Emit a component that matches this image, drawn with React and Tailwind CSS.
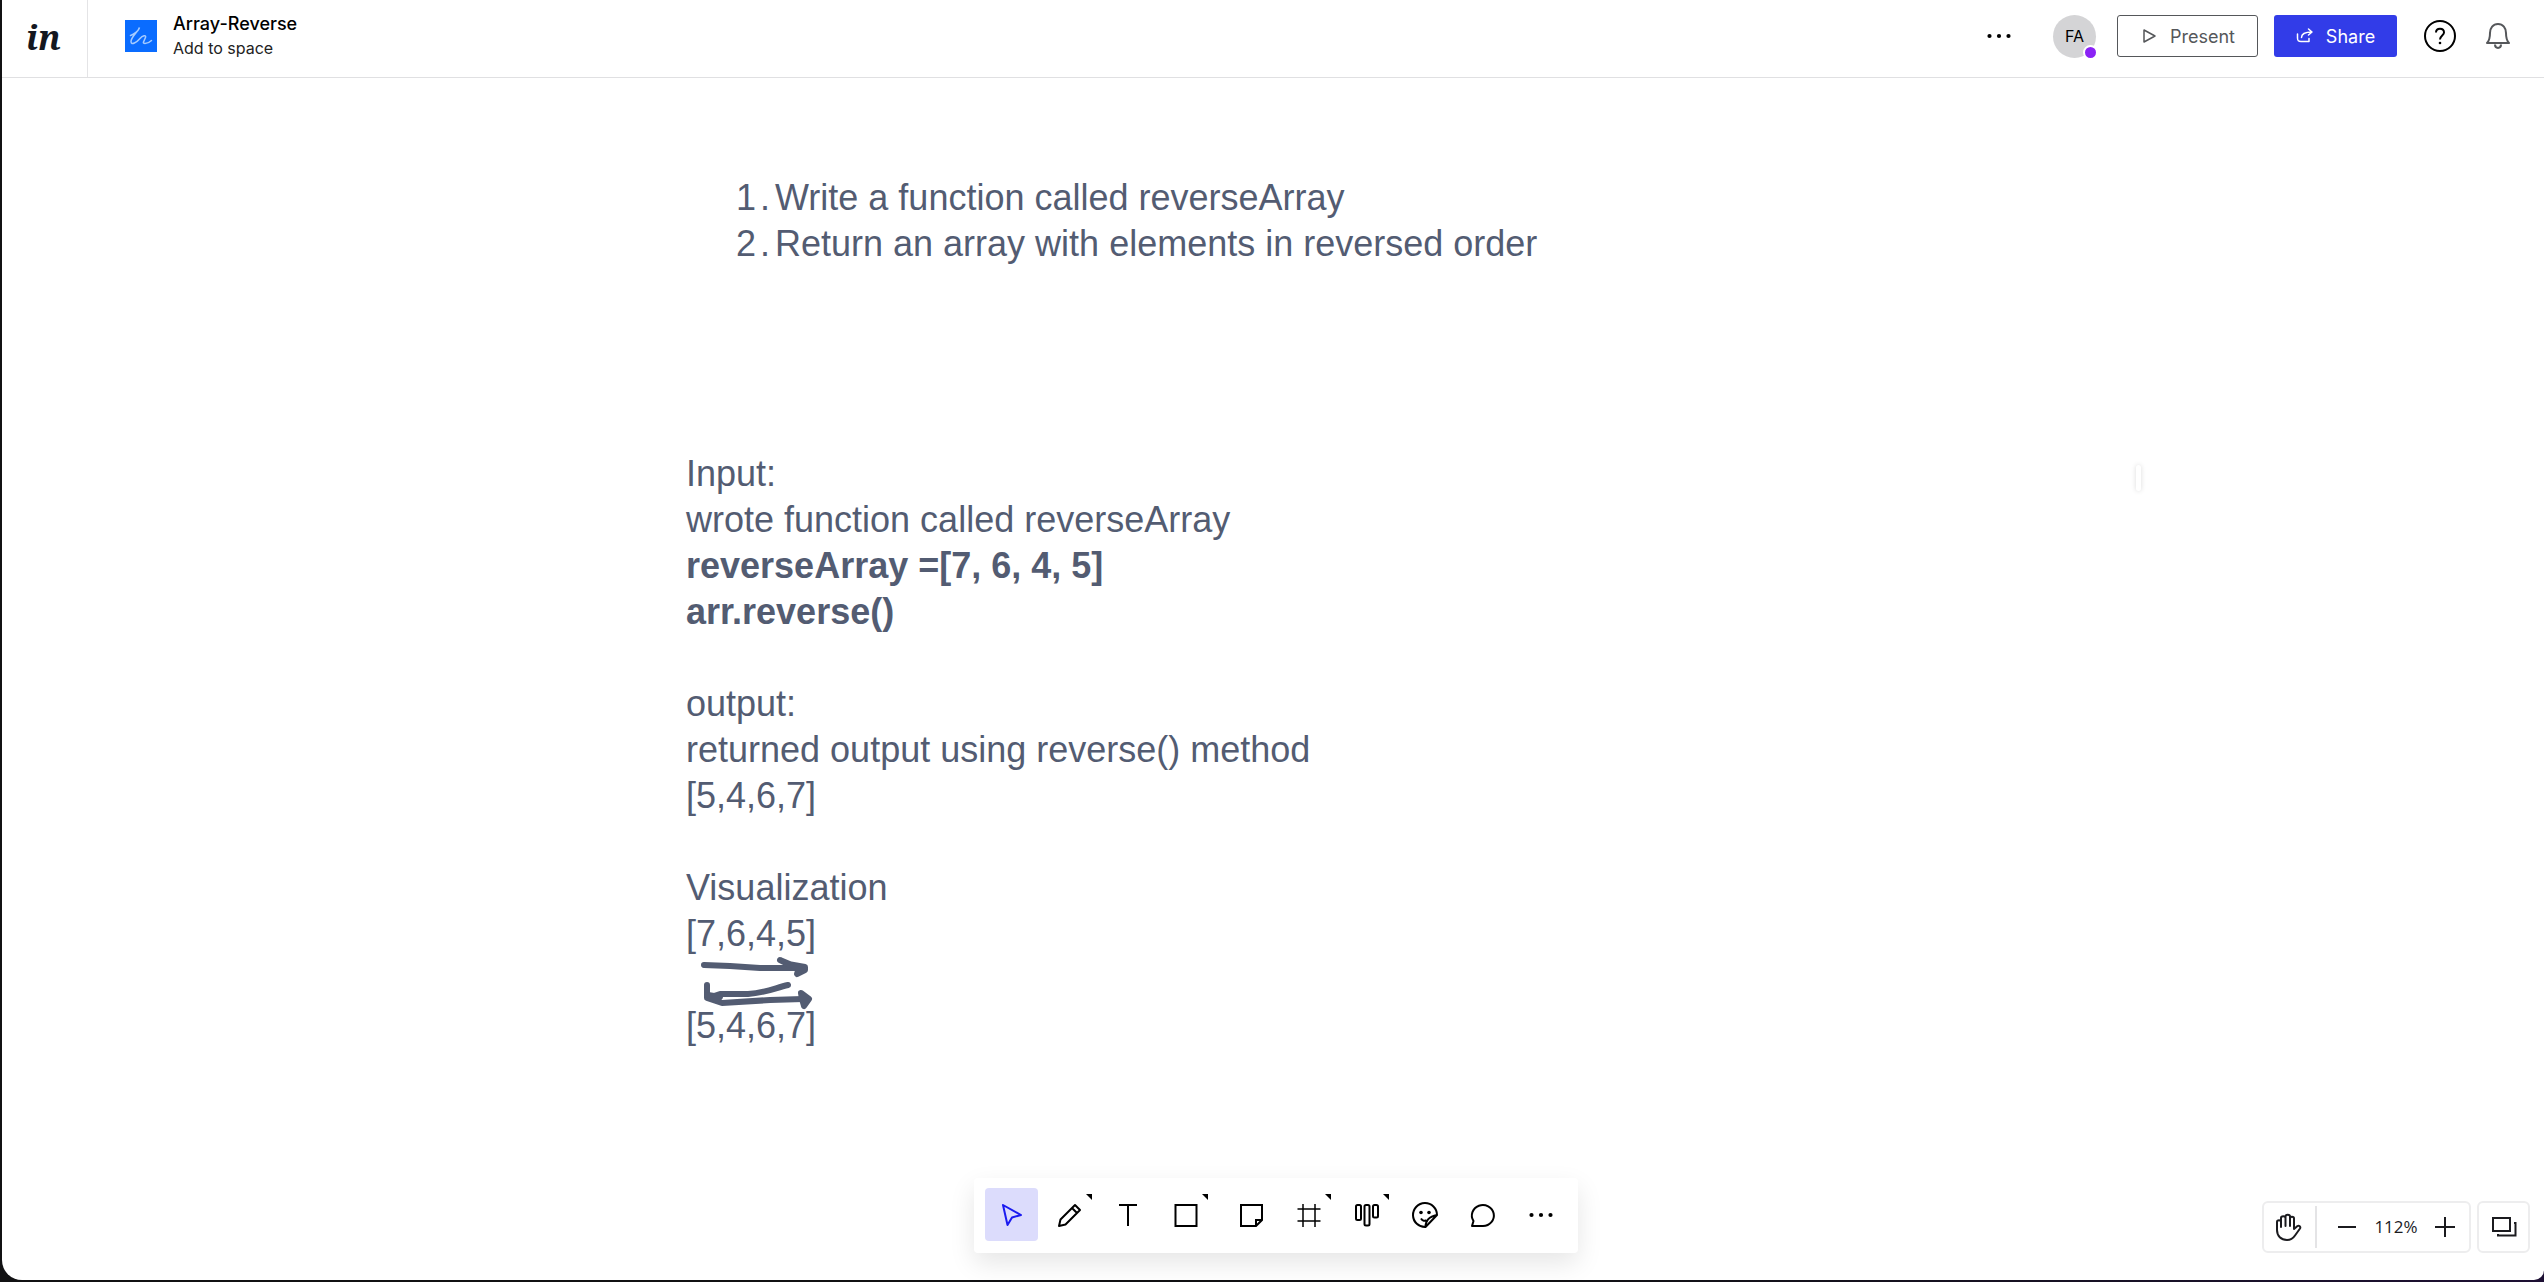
const INK = "#535c72";

function Svg({ size = 28, sw = 2, className = "", children }) {
  return (
    <svg width={size} height={size} viewBox={`0 0 ${size} ${size}`} fill="none" stroke="currentColor" strokeWidth={sw} className={`shrink-0 ${className}`} aria-hidden="true">
      {children}
    </svg>
  );
}

function Dots() {
  return (
    <Svg>
      <g fill="currentColor" stroke="none">
        <circle cx="4.5" cy="14" r="2.1" />
        <circle cx="14" cy="14" r="2.1" />
        <circle cx="23.5" cy="14" r="2.1" />
      </g>
    </Svg>
  );
}

function Tool({ label, active, more, children }) {
  return (
    <button
      type="button"
      aria-label={label}
      className={`relative flex size-[53px] items-center justify-center rounded ${active ? "bg-[#dcdcfc] text-[#1b1bf0]" : "text-black"}`}
    >
      {children}
      {more && (
        <svg width="6" height="6" viewBox="0 0 6 6" className="absolute right-1 top-[6px]" aria-hidden="true">
          <path d="M0 0H6V6Z" fill="#000" />
        </svg>
      )}
    </button>
  );
}

function Header() {
  return (
    <header className="flex h-[78px] items-stretch border-b border-[#e0e0e2]">
      <a href="#home" aria-label="in" className="flex w-[86px] items-center justify-center border-r border-[#e4e4e6] pb-1 pr-[2px]">
        <span className="font-['Noto_Serif','DejaVu_Serif',serif] text-[34px] font-bold italic leading-8 text-[#14171f]">in</span>
      </a>
      <div className="flex items-center gap-4 pb-[5px] pl-[37px]">
        <svg width="32" height="32" viewBox="0 0 32 32" fill="none" aria-hidden="true">
          <rect width="32" height="32" fill="#0a6cff" />
          <path d="M5.500 15.500C9 14.500 13.500 11 14.500 7.500C13 12 6 17 6 21.500C6 26 12 22 15 18.500C17.500 15.500 21.500 14.500 20.500 17.500C19.500 20.500 16.500 23.500 20 23.500C23 23.500 25 22 26.500 20.500" stroke="#a5cbff" strokeWidth="1.5" strokeLinecap="round" />
        </svg>
        <div className="flex flex-col">
          <h1 className="text-[18px] font-medium leading-6 text-black">Array-Reverse</h1>
          <button type="button" className="text-left text-[16px] leading-6 text-[#222]">Add to space</button>
        </div>
      </div>
      <div className="ml-auto flex items-center pb-[5px] pr-8">
        <button type="button" aria-label="More options" className="mr-[40px] text-black"><Dots /></button>
        <div className="relative mr-[21px] flex size-[43px] items-center justify-center rounded-full bg-[#d4d4d6] text-[16px] text-black">
          FA
          <span className="absolute -bottom-[2px] -right-[2px] size-[15px] rounded-full border-2 border-white bg-[#8a22f5]" />
        </div>
        <button type="button" className="mr-4 flex h-[42px] w-[141px] items-center justify-center gap-3 rounded-[3px] border border-[#55575a] text-[18px] text-[#55575a]">
          <Svg size={18} sw={1.5}><path d="M4 3V15L15 9Z" strokeLinejoin="round" /></Svg>
          Present
        </button>
        <button type="button" className="mr-[26px] flex h-[42px] w-[123px] items-center justify-center gap-3 rounded-[3px] bg-[#323ce8] text-[18px] text-white">
          <Svg size={18} sw={1.5}>
            <path d="M1.500 7V11C1.500 14 2.500 14.500 5 14.500H13V11.500M5.500 10.500C5.500 7 8 5 16 5M12.500 2L16 5L12.500 8" strokeLinejoin="round" strokeLinecap="round" />
          </Svg>
          Share
        </button>
        <button type="button" aria-label="Help" className="mr-[27px] text-black">
          <Svg size={34}>
            <circle cx="17" cy="17" r="15" />
            <path d="M13 13.500C13 8.500 21 8.500 21 13.500C21 16.500 17 16.500 17 20.500" />
            <circle cx="17" cy="24" r="1.3" fill="currentColor" stroke="none" />
          </Svg>
        </button>
        <button type="button" aria-label="Notifications" className="text-[#55575a]">
          <Svg size={28}>
            <path d="M3 21C6 18 6 15 6 11C6 6 9 2 14 2C19 2 22 6 22 11C22 15 22 18 25 21ZM11 22.500C11 27 17 27 17 22.500" strokeLinejoin="round" />
          </Svg>
        </button>
      </div>
    </header>
  );
}

function Item({ n, children }) {
  return (
    <li className="flex whitespace-nowrap">
      <span className="flex w-[39px] shrink-0 gap-1"><span>{n}</span><span>.</span></span>
      {children}
    </li>
  );
}

function Board() {
  return (
    <main className="relative flex grow flex-col pl-[684px] pt-[97px] font-['Liberation_Sans',sans-serif] text-[36px] leading-[46px] text-[#535c72]">
      <ol className="mb-[184px] pl-[50px]">
        <Item n="1">Write a function called reverseArray</Item>
        <Item n="2">Return an array with elements in reversed order</Item>
      </ol>
      <section>
        <p>Input:</p>
        <p>wrote function called reverseArray</p>
        <p className="font-bold">reverseArray =[7, 6, 4, 5]</p>
        <p className="font-bold">arr.reverse()</p>
      </section>
      <section className="mt-[46px]">
        <p>output:</p>
        <p>returned output using reverse() method</p>
        <p>[5,4,6,7]</p>
      </section>
      <section className="mt-[46px]">
        <p>Visualization</p>
        <p>[7,6,4,5]</p>
        <svg width="130" height="46" viewBox="686 957 130 46" className="block overflow-visible" fill="none" stroke={INK} strokeWidth="6" strokeLinecap="round" strokeLinejoin="round" aria-hidden="true">
          <path d="M704 965L730 966L760 968H800" />
          <path d="M780 960L788 964L805 967L805 970L797 974L799 968Z" fill={INK} />
          <path d="M788 985C775 988 765 993 748 994L720 994L708 998M707 985V998L722 1003L770 1000L803 999" />
          <path d="M708 995L720 997L716 1000Z" fill={INK} />
          <path d="M801 993L809 999L804 1006L802 999Z" fill={INK} />
        </svg>
        <p>[5,4,6,7]</p>
      </section>
      <span aria-hidden="true" className="absolute right-[403px] top-[387px] h-[26px] w-[5px] rounded-full bg-white shadow-[0_0_5px_rgba(0,0,0,0.15)]" />
    </main>
  );
}

function Toolbar() {
  return (
    <nav aria-label="Tools" className="flex h-[75px] items-center gap-3 rounded bg-white px-[11px] pb-[2px] shadow-[0_10px_26px_rgba(0,0,0,0.1)]">
      <div className="flex gap-[5px]">
        <Tool label="Select" active><Svg><path d="M5 4L23 14L14 16.500L9.500 24Z" strokeLinejoin="round" /></Svg></Tool>
        <Tool label="Draw" more><Svg><path d="M3 25L4.500 18.500L19 4L24 9L9.500 23.500ZM16 7L21 12" strokeLinejoin="round" /></Svg></Tool>
        <Tool label="Text"><Svg><path d="M5 4H23M14 4V25" /></Svg></Tool>
        <Tool label="Shape" more><Svg><rect x="3.5" y="4" width="21" height="21" /></Svg></Tool>
      </div>
      <div className="flex gap-[5px]">
        <Tool label="Note"><Svg><path d="M4 4H25V19L19 25H4ZM25 19H19V25" /></Svg></Tool>
        <Tool label="Frame" more><Svg sw={1.5}><path d="M8 3V26M20 3V26M2.500 8H25.500M2.500 20H25.500" /></Svg></Tool>
        <Tool label="Kanban" more><Svg><rect x="3" y="4" width="5" height="15" rx="1.5" /><rect x="11.5" y="4" width="5" height="20.5" rx="1.5" /><rect x="20" y="4" width="5" height="12.5" rx="1.5" /></Svg></Tool>
        <Tool label="Reaction"><Svg><path d="M14.500 26A12 12 0 1 1 26 14L14.500 26C14.500 20 17 16 26 14M10 17.500C11.500 20 14 20.500 15.500 19" strokeLinejoin="round" /><circle cx="10" cy="11.5" r="1.8" fill="currentColor" stroke="none" /><circle cx="18" cy="11.5" r="1.8" fill="currentColor" stroke="none" /></Svg></Tool>
        <Tool label="Comment"><Svg><path d="M3 25L4.500 20A11 10.500 0 1 1 14 25Z" strokeLinejoin="round" /></Svg></Tool>
        <Tool label="More tools"><Dots /></Tool>
      </div>
    </nav>
  );
}

function ZoomControls() {
  return (
    <div className="flex gap-[6px] text-[#1b1b1f]">
      <div className="flex h-[52px] items-center rounded-md border-2 border-[#ededee] bg-white">
        <button type="button" aria-label="Pan" className="flex h-[42px] w-[53px] items-center justify-center border-r-2 border-[#e4e4e6] pr-1">
          <Svg>
            <path d="M3 17V9C3 6.500 7 6.500 7 9V14V5C7 2.500 11.500 2.500 11.500 5V13V3.500C11.500 1 16 1 16 3.500V13V5.500C16 3 20 3 20 5.500V16L23.500 13C25 12 27 14 26 15.500L21 22.500C19 25.500 17 27 13 27C7 27 3 23 3 17Z" strokeLinejoin="round" />
          </Svg>
        </button>
        <button type="button" aria-label="Zoom out" className="ml-4"><Svg><path d="M5 14H23" /></Svg></button>
        <span className="w-[70px] text-center font-['Open_Sans',sans-serif] text-[17px]">112%</span>
        <button type="button" aria-label="Zoom in" className="mr-[10px]"><Svg><path d="M4 14H24M14 4V24" /></Svg></button>
      </div>
      <button type="button" aria-label="Presentation view" className="flex h-[52px] w-[53px] items-center justify-center rounded-md border-2 border-[#ededee] bg-white">
        <Svg><path d="M3 5H20V18H3ZM24 10H25.500V22.500H8V21" /></Svg>
      </button>
    </div>
  );
}

export default function App() {
  return (
    <div className="min-h-screen bg-linear-to-r from-[#111113] from-60% to-[#1d0f33] pb-[2px] pl-[2px] font-['Inter','Liberation_Sans',sans-serif]">
      <div className="flex min-h-[calc(100vh-2px)] flex-col rounded-bl-[20px] rounded-br-[10px] bg-white">
        <Header />
        <Board />
        <footer className="grid grid-cols-[1fr_auto_1fr] items-end pb-[27px] pl-[6px]">
          <span />
          <Toolbar />
          <div className="flex justify-end pr-[14px]"><ZoomControls /></div>
        </footer>
      </div>
    </div>
  );
}
